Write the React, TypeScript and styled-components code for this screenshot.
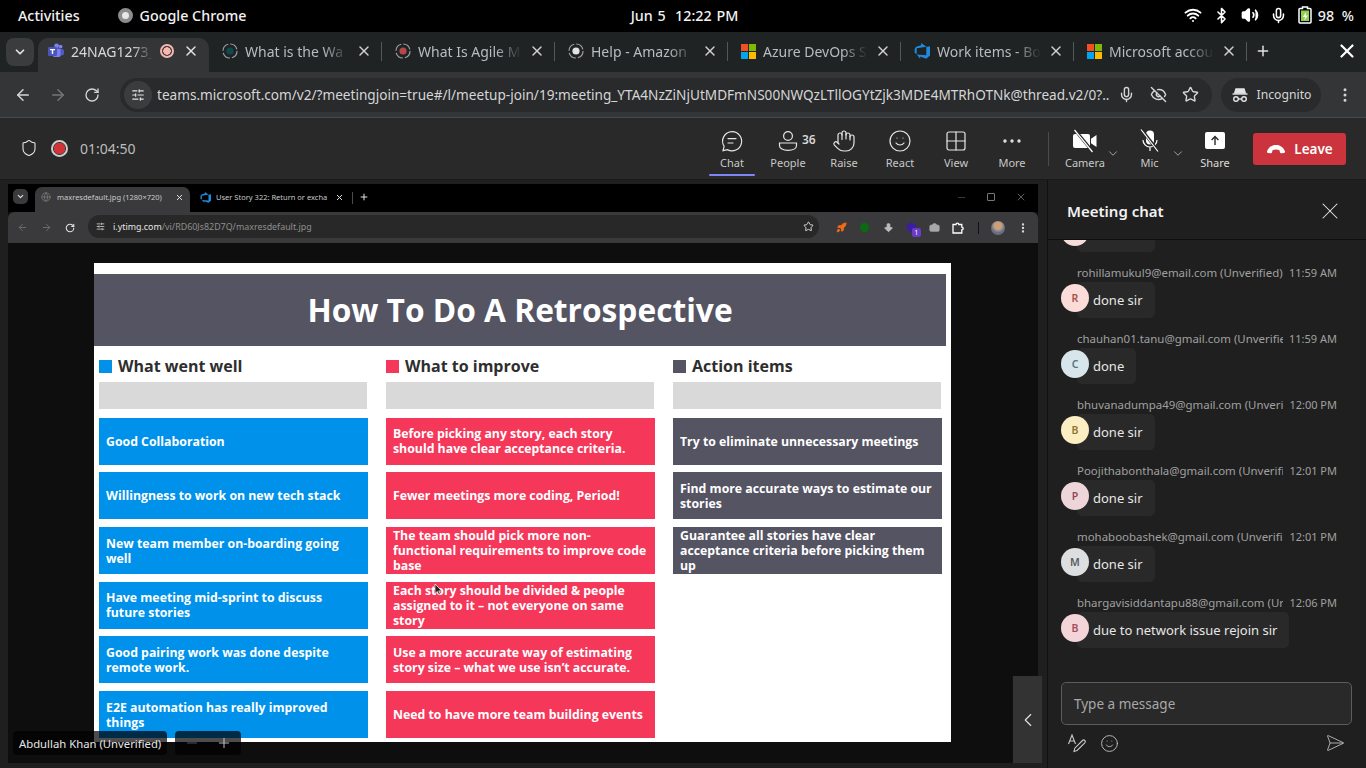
import React from 'react'
import styled, { createGlobalStyle } from 'styled-components'
import {
  ArrowBigDown,
  ArrowLeft,
  ArrowRight,
  Bluetooth,
  Box,
  Camera,
  ChevronDown,
  ChevronLeft,
  Ellipsis,
  EllipsisVertical,
  EyeOff,
  Globe,
  Grid2x2,
  Hand,
  Mic,
  Minus,
  Plus,
  Rocket,
  RotateCw,
  Shield,
  SlidersHorizontal,
  Smile,
  SendHorizontal,
  Star,
  Volume2,
  Wifi,
  X,
} from 'lucide-react'

const GlobalStyle = createGlobalStyle`
  html, body {
    margin: 0;
    padding: 0;
    width: 1366px;
    height: 768px;
    overflow: hidden;
    background: #1f1f1f;
    font-family: "Noto Sans", "Open Sans", sans-serif;
  }
  * { box-sizing: border-box; }
`

const MsLogo = ({ size = 15 }: { size?: number }) => (
  <svg width={size} height={size} viewBox="0 0 16 16">
    <rect width="7.5" height="7.5" fill="#f25022" />
    <rect x="8.5" width="7.5" height="7.5" fill="#7fba00" />
    <rect y="8.5" width="7.5" height="7.5" fill="#00a4ef" />
    <rect x="8.5" y="8.5" width="7.5" height="7.5" fill="#ffb900" />
  </svg>
)

const TeamsLogo = () => (
  <svg width="16" height="16" viewBox="0 0 16 16">
    <circle cx="12.6" cy="3.6" r="1.9" fill="#7b83eb" />
    <circle cx="8.6" cy="2.8" r="2.4" fill="#7b83eb" />
    <rect x="10" y="6" width="6" height="6.5" rx="2" fill="#5059c9" />
    <rect x="5" y="5.6" width="7.5" height="8.5" rx="1.5" fill="#7b83eb" />
    <rect x="0" y="4" width="9" height="9" rx="1" fill="#4b53bc" />
    <path d="M2 6h5v1.2H5.2V11H3.8V7.2H2z" fill="#fff" />
  </svg>
)

const AzureLogo = ({ size = 16 }: { size?: number }) => (
  <svg width={size} height={size} viewBox="0 0 16 16">
    <path
      d="M16 3.2v9.4l-3.8 3.2-6-2.2v2.1L2.7 11.5l9.6.8V4L16 3.2zM12.5 3.7 7.1 0v2.3L2.2 3.8.7 5.7v4.3l2 .9V5.3l9.8-1.6z"
      fill="#1f8be0"
    />
  </svg>
)

const RingFavicon = ({ tint }: { tint: string }) => (
  <svg width="16" height="16" viewBox="0 0 16 16">
    <circle cx="8" cy="8" r="7" fill="none" stroke="#9aa0a6" strokeWidth="1.2" strokeDasharray="9 2" />
    <circle cx="8" cy="8" r="3.6" fill={tint} />
  </svg>
)

const ChatIcon = () => (
  <svg width="24" height="24" viewBox="0 0 24 24" fill="none" stroke="#e6e6e6" strokeWidth="1.2">
    <path d="M12 2.6a9.6 9.6 0 1 1-4.6 18L3 21.6l1.1-4.3A9.6 9.6 0 0 1 12 2.6z" />
    <path d="M8 9.6h8M8 14h5" strokeLinecap="round" />
  </svg>
)

const PeopleIcon = () => (
  <svg width="24" height="24" viewBox="0 0 24 24" fill="none" stroke="#e6e6e6" strokeWidth="1.2">
    <circle cx="12" cy="7" r="4.4" />
    <path d="M3.5 14h17v2.4c0 3-3.6 5-8.5 5s-8.5-2-8.5-5z" />
  </svg>
)

const CameraOffIcon = () => (
  <svg width="26" height="24" viewBox="0 0 26 24">
    <path d="M3 5h13a2 2 0 0 1 2 2v10a2 2 0 0 1-2 2H3a2 2 0 0 1-2-2V7a2 2 0 0 1 2-2z" fill="#fff" />
    <path d="M19 9.8 24.5 6v12L19 14.2z" fill="#fff" />
    <path d="M3 1l18 22" stroke="#292929" strokeWidth="3" />
    <path d="M2.5 1l18 22" stroke="#fff" strokeWidth="1.2" />
  </svg>
)

const MicOffIcon = () => (
  <svg width="24" height="24" viewBox="0 0 24 24" fill="none">
    <rect x="8" y="1.5" width="8" height="14" rx="4" fill="#fff" />
    <path d="M5 11a7 7 0 0 0 14 0M12 18v4" stroke="#fff" strokeWidth="1.2" />
    <path d="M3.5 .5l17 22" stroke="#292929" strokeWidth="3" />
    <path d="M3 .5l17 22" stroke="#fff" strokeWidth="1.2" />
  </svg>
)

const ShareIcon = () => (
  <svg width="24" height="24" viewBox="0 0 24 24">
    <rect x="2" y="3" width="20" height="17" rx="2" fill="#fff" />
    <path d="M12 16V8M8.6 11 12 7.6l3.4 3.4" fill="none" stroke="#292929" strokeWidth="1.4" />
  </svg>
)

const HangUpIcon = () => (
  <svg width="20" height="12" viewBox="0 0 20 12">
    <path
      d="M1 8.2C3 3.8 6.4 2 10 2s7 1.8 9 6.2c.3.9-.2 1.6-1 1.7l-2.6.4c-.8.1-1.3-.3-1.5-1l-.4-2C12.4 6.7 11.2 6.5 10 6.5s-2.4.2-3.5.8l-.4 2c-.2.7-.7 1.1-1.5 1L2 9.9C1.2 9.8.7 9.1 1 8.2z"
      fill="#fff"
    />
  </svg>
)

const BatteryIcon = () => (
  <svg width="14" height="18" viewBox="0 0 14 18">
    <path d="M4.5 1h5v1.5H12a1 1 0 0 1 1 1V16a1 1 0 0 1-1 1H2a1 1 0 0 1-1-1V3.5a1 1 0 0 1 1-1h2.5z" fill="none" stroke="#fff" strokeWidth="1.5" />
    <rect x="3" y="4.5" width="8" height="10.5" fill="#8fd14f" />
    <path d="M8 6 4.8 11h2.4L6 14.5 10 9.5H7.6z" fill="#fff" />
  </svg>
)

const IncognitoIcon = () => (
  <svg width="18" height="18" viewBox="0 0 18 18" fill="none" stroke="#e3e3e3" strokeWidth="1.4">
    <path d="M5 3h8l1.3 4H3.7z" fill="#e3e3e3" />
    <path d="M1.5 8h15" />
    <circle cx="5" cy="13" r="2.3" />
    <circle cx="13" cy="13" r="2.3" />
    <path d="M7.3 13h3.4" />
  </svg>
)

const FormatIcon = () => (
  <svg width="20" height="20" viewBox="0 0 20 20" fill="none" stroke="#c8c8c8" strokeWidth="1.1">
    <path d="M1.5 11 5 2l3.500 9M2.800 8h4.400" />
    <path d="M7 18.500l.8-3.300L15.500 7.500a1.600 1.600 0 0 1 2.300 2.300l-7.700 7.700z" />
  </svg>
)

const ExtensionIcon = () => (
  <svg width="13" height="13" viewBox="0 0 13 13" fill="none" stroke="#fff" strokeWidth="1.3">
    <path d="M1 3.5h3a1.400 1.400 0 0 1 2.800 0h3v2.700a1.400 1.400 0 0 1 0 2.800V12H1z" />
  </svg>
)

const browserTabs = [
  { title: 'What is the Wa', icon: <RingFavicon tint="#0f4a4f" /> },
  { title: 'What Is Agile M', icon: <RingFavicon tint="#b5484b" /> },
  { title: 'Help - Amazon', icon: <RingFavicon tint="#e3e3e3" /> },
  { title: 'Azure DevOps S', icon: <MsLogo /> },
  { title: 'Work items - Bo', icon: <AzureLogo /> },
  { title: 'Microsoft accou', icon: <MsLogo /> },
]

const messages = [
  { sender: 'kumarsuraj12@gmail.com (Unverified)', time: '11:58 AM', text: 'done sir', letter: 'K', bg: '#f6dcd9', fg: '#a2544c' },
  { sender: 'rohillamukul9@email.com (Unverified)', time: '11:59 AM', text: 'done sir', letter: 'R', bg: '#fbdcd8', fg: '#a2544c' },
  { sender: 'chauhan01.tanu@gmail.com (Unverified)', time: '11:59 AM', text: 'done', letter: 'C', bg: '#d8e6ec', fg: '#4f7485' },
  { sender: 'bhuvanadumpa49@gmail.com (Unverified)', time: '12:00 PM', text: 'done sir', letter: 'B', bg: '#fbeec3', fg: '#8f7430' },
  { sender: 'Poojithabonthala@gmail.com (Unverified)', time: '12:01 PM', text: 'done sir', letter: 'P', bg: '#eed5da', fg: '#8c4a5a' },
  { sender: 'mohaboobashek@gmail.com (Unverified)', time: '12:01 PM', text: 'done sir', letter: 'M', bg: '#dcdee0', fg: '#565b60' },
  { sender: 'bhargavisiddantapu88@gmail.com (Unverified)', time: '12:06 PM', text: 'due to network issue rejoin sir', letter: 'B', bg: '#f3d4d8', fg: '#a14f5c' },
]

const retro = [
  {
    title: 'What went well',
    color: '#0091ea',
    items: [
      'Good Collaboration',
      'Willingness to work on new tech stack',
      'New team member on-boarding going well',
      'Have meeting mid-sprint to discuss future stories',
      'Good pairing work was done despite remote work.',
      'E2E automation has really improved things',
    ],
  },
  {
    title: 'What to improve',
    color: '#f5375a',
    items: [
      'Before picking any story, each story should have clear acceptance criteria.',
      'Fewer meetings more coding, Period!',
      'The team should pick more non-functional requirements to improve code base',
      'Each story should be divided & people assigned to it – not everyone on same story',
      'Use a more accurate way of estimating story size – what we use isn’t accurate.',
      'Need to have more team building events',
    ],
  },
  {
    title: 'Action items',
    color: '#555463',
    items: [
      'Try to eliminate unnecessary meetings',
      'Find more accurate ways to estimate our stories',
      'Guarantee all stories have clear acceptance criteria before picking them up',
    ],
  },
]

const tools = [
  { label: 'Chat', icon: <ChatIcon /> },
  { label: 'People', icon: <PeopleIcon />, count: '36' },
  { label: 'Raise', icon: <Hand size={24} strokeWidth={1.2} color="#e6e6e6" /> },
  { label: 'React', icon: <Smile size={24} strokeWidth={1.2} color="#e6e6e6" /> },
  { label: 'View', icon: <Grid2x2 size={24} strokeWidth={1.2} color="#e6e6e6" /> },
  { label: 'More', icon: <Ellipsis size={24} strokeWidth={1.4} color="#e6e6e6" /> },
]

export default function App() {
  return (
    <S.Screen>
      <GlobalStyle />
      <S.SystemBar>
        <S.SystemLeft>
          <span>Activities</span>
          <S.ChromeApp>
            <S.ChromeDot />
            Google Chrome
          </S.ChromeApp>
        </S.SystemLeft>
        <S.Clock>Jun 5&nbsp;&nbsp;12:22 PM</S.Clock>
        <S.SystemRight>
          <Wifi size={18} strokeWidth={2.6} color="#fff" />
          <Bluetooth size={17} strokeWidth={2.2} color="#fff" />
          <Volume2 size={18} strokeWidth={2.2} color="#fff" fill="#fff" />
          <Mic size={17} strokeWidth={2.2} color="#fff" />
          <S.Battery>
            <BatteryIcon />
            98 %
          </S.Battery>
        </S.SystemRight>
      </S.SystemBar>

      <S.TabStrip>
        <S.TabMenu>
          <ChevronDown size={14} strokeWidth={3} color="#e3e3e3" />
        </S.TabMenu>
        <S.ActiveTab>
          <TeamsLogo />
          <S.TabTitle $bright>24NAG1273_</S.TabTitle>
          <S.RecordDot />
          <X size={16} strokeWidth={2.2} color="#e3e3e3" />
        </S.ActiveTab>
        {browserTabs.map(t => (
          <S.Tab key={t.title}>
            {t.icon}
            <S.TabTitle>{t.title}</S.TabTitle>
            <X size={16} strokeWidth={2.2} color="#d0d0d0" />
          </S.Tab>
        ))}
        <S.NewTab>
          <Plus size={16} strokeWidth={2.2} color="#e3e3e3" />
        </S.NewTab>
        <S.WindowClose>
          <X size={22} strokeWidth={2.4} color="#fff" />
        </S.WindowClose>
      </S.TabStrip>

      <S.Toolbar>
        <S.NavButtons>
          <ArrowLeft size={18} color="#d5d5d5" />
          <ArrowRight size={18} color="#757575" />
          <RotateCw size={16} color="#d5d5d5" />
        </S.NavButtons>
        <S.UrlPill>
          <S.SiteChip>
            <SlidersHorizontal size={14} color="#e3e3e3" />
          </S.SiteChip>
          <S.Url>
            teams.microsoft.com/v2/?meetingjoin=true#/l/meetup-join/19:meeting_YTA4NzZiNjUtMDFmNS00NWQzLTllOGYtZjk3MDE4MTRhOTNk@thread.v2/0?...
          </S.Url>
          <S.UrlActions>
            <Mic size={17} color="#d5d5d5" />
            <EyeOff size={17} color="#d5d5d5" />
            <Star size={17} color="#d5d5d5" />
          </S.UrlActions>
        </S.UrlPill>
        <S.IncognitoPill>
          <IncognitoIcon />
          Incognito
        </S.IncognitoPill>
        <EllipsisVertical size={18} color="#d5d5d5" />
      </S.Toolbar>

      <S.MeetingBar>
        <S.Status>
          <Shield size={18} strokeWidth={1.4} color="#ececec" />
          <S.RecordBadge />
          <S.Timer>01:04:50</S.Timer>
        </S.Status>
        <S.Tools>
          {tools.map(t => (
            <S.Tool key={t.label} $active={t.label === 'Chat'}>
              <S.ToolIcon>
                {t.icon}
                {t.count && <S.Count>{t.count}</S.Count>}
              </S.ToolIcon>
              {t.label}
            </S.Tool>
          ))}
          <S.ToolDivider />
          <S.Tool>
            <S.ToolIcon>
              <CameraOffIcon />
            </S.ToolIcon>
            Camera
          </S.Tool>
          <S.Caret>
            <ChevronDown size={15} strokeWidth={1.2} color="#d6d6d6" />
          </S.Caret>
          <S.MicTool>
            <S.ToolIcon>
              <MicOffIcon />
            </S.ToolIcon>
            Mic
          </S.MicTool>
          <S.MicCaret>
            <ChevronDown size={15} strokeWidth={1.2} color="#d6d6d6" />
          </S.MicCaret>
          <S.ShareTool>
            <S.ToolIcon>
              <ShareIcon />
            </S.ToolIcon>
            Share
          </S.ShareTool>
          <S.LeaveButton>
            <HangUpIcon />
            Leave
          </S.LeaveButton>
        </S.Tools>
      </S.MeetingBar>

      <S.Main>
        <S.Stage>
          <S.SharedScreen>
            <S.InnerTabs>
              <S.InnerMenu>
                <ChevronDown size={9} strokeWidth={3} color="#e3e3e3" />
              </S.InnerMenu>
              <S.InnerActiveTab>
                <Globe size={10} color="#777" />
                <S.InnerTabTitle>maxresdefault.jpg (1280×720)</S.InnerTabTitle>
                <X size={9} strokeWidth={2.6} color="#e3e3e3" />
              </S.InnerActiveTab>
              <S.InnerTab>
                <AzureLogo size={11} />
                <S.InnerTabTitle>User Story 322: Return or excha</S.InnerTabTitle>
                <X size={9} strokeWidth={2.6} color="#e3e3e3" />
              </S.InnerTab>
              <S.InnerDivider />
              <S.InnerPlus>
                <Plus size={10} strokeWidth={2.4} color="#e3e3e3" />
              </S.InnerPlus>
              <S.WindowControls>
                <Minus size={11} strokeWidth={1} color="#777" />
                <S.RestoreIcon />
                <X size={12} strokeWidth={1} color="#bdbdbd" />
              </S.WindowControls>
            </S.InnerTabs>
            <S.InnerToolbar>
              <S.InnerNav>
                <ArrowLeft size={11} color="#6f6f6f" />
                <ArrowRight size={11} color="#6f6f6f" />
                <RotateCw size={10} strokeWidth={2.6} color="#e0e0e0" />
              </S.InnerNav>
              <S.InnerUrl>
                <SlidersHorizontal size={9} color="#e0e0e0" />
                <S.InnerUrlText>
                  <b>i.ytimg.com</b>/vi/RD60Js82D7Q/maxresdefault.jpg
                </S.InnerUrlText>
                <Star size={11} strokeWidth={2} color="#e0e0e0" />
              </S.InnerUrl>
              <S.Extensions>
                <Rocket size={11} color="#f26b15" fill="#f26b15" />
                <Shield size={11} color="#0b6b12" fill="#0b6b12" />
                <ArrowBigDown size={11} color="#bcbcbc" fill="#bcbcbc" />
                <S.ExtBadge>
                  <Box size={11} color="#3a1fa0" fill="#3a1fa0" />
                  <S.ExtCount>1</S.ExtCount>
                </S.ExtBadge>
                <Camera size={11} color="#a8a8a8" fill="#a8a8a8" />
                <ExtensionIcon />
                <S.ExtDivider />
                <S.ExtAvatar />
                <EllipsisVertical size={12} strokeWidth={2.6} color="#e0e0e0" />
              </S.Extensions>
            </S.InnerToolbar>
            <S.SlideArea>
              <S.Slide>
                <S.Banner>How To Do A Retrospective</S.Banner>
                <S.Columns>
                  {retro.map(col => (
                    <S.Column key={col.title}>
                      <S.ColumnHead>
                        <S.Swatch $color={col.color} />
                        {col.title}
                      </S.ColumnHead>
                      <S.GreyBar />
                      {col.items.map(item => (
                        <S.Card key={item} $color={col.color}>
                          {item}
                        </S.Card>
                      ))}
                    </S.Column>
                  ))}
                </S.Columns>
              </S.Slide>
            </S.SlideArea>
            <S.Cursor width="9" height="13" viewBox="0 0 9 13">
              <path d="M1 1v9.5l2.3-2 1.6 3.4 1.5-.7-1.6-3.3h3z" fill="#222" stroke="#fff" strokeWidth=".7" />
            </S.Cursor>
            <S.Overlays>
              <S.NameTag>Abdullah Khan (Unverified)</S.NameTag>
              <S.ZoomTag>
                <Minus size={16} strokeWidth={1.2} color="#5d6b78" />
                <Plus size={16} strokeWidth={1.2} color="#e8e8e8" />
              </S.ZoomTag>
            </S.Overlays>
            <S.CollapseHandle>
              <ChevronLeft size={22} strokeWidth={1.2} color="#e6e6e6" />
            </S.CollapseHandle>
          </S.SharedScreen>
        </S.Stage>

        <S.ChatPanel>
          <S.ChatHeader>
            Meeting chat
            <X size={28} strokeWidth={0.9} color="#e6e6e6" />
          </S.ChatHeader>
          <S.MessageList>
            {messages.map(m => (
              <S.Message key={m.sender}>
                <S.MessageMeta>
                  <S.Sender>{m.sender}</S.Sender>
                  <S.Time>{m.time}</S.Time>
                </S.MessageMeta>
                <S.MessageRow>
                  <S.Avatar $bg={m.bg} $fg={m.fg}>
                    {m.letter}
                  </S.Avatar>
                  <S.Bubble>{m.text}</S.Bubble>
                </S.MessageRow>
              </S.Message>
            ))}
          </S.MessageList>
          <S.Composer>Type a message</S.Composer>
          <S.ComposerActions>
            <S.ComposerLeft>
              <FormatIcon />
              <Smile size={19} strokeWidth={1.1} color="#c8c8c8" />
            </S.ComposerLeft>
            <SendHorizontal size={20} strokeWidth={1} color="#c8c8c8" />
          </S.ComposerActions>
        </S.ChatPanel>
      </S.Main>
    </S.Screen>
  )
}

const toolLabel = `
  height: 100%;
  flex: none;
  display: flex;
  flex-direction: column;
  align-items: center;
  justify-content: flex-end;
  padding-bottom: 9px;
  font-size: 11px;
  line-height: 15px;
  color: #c8c8c8;
`

const S = {
  Screen: styled.div`
    width: 1366px;
    height: 768px;
    display: flex;
    flex-direction: column;
    overflow: hidden;
    background: #1f1f1f;
  `,

  SystemBar: styled.div`
    height: 32px;
    flex: none;
    display: grid;
    grid-template-columns: 1fr auto 1fr;
    align-items: center;
    padding: 0 12px 2px 18px;
    background: #000;
    color: #f2f2f2;
    font-size: 14.3px;
    font-weight: 500;
  `,

  SystemLeft: styled.div`
    display: flex;
    align-items: center;
    gap: 38px;
  `,

  ChromeApp: styled.div`
    display: flex;
    align-items: center;
    gap: 7px;
  `,

  ChromeDot: styled.span`
    width: 15px;
    height: 15px;
    border-radius: 50%;
    border: 4px solid #8c8c8c;
    background: #e8e8e8;
  `,

  Clock: styled.div`
    margin-left: -3px;
    word-spacing: 1px;
    text-align: center;
  `,

  SystemRight: styled.div`
    display: flex;
    align-items: center;
    justify-content: flex-end;
    gap: 11px;
  `,

  Battery: styled.div`
    display: flex;
    align-items: center;
    gap: 6px;
    word-spacing: 4px;
  `,

  TabStrip: styled.div`
    height: 40px;
    flex: none;
    display: flex;
    align-items: flex-end;
    padding-left: 6px;
    background: #202324;
  `,

  TabMenu: styled.div`
    width: 28px;
    height: 28px;
    margin-right: 4px;
    flex: none;
    align-self: center;
    display: flex;
    align-items: center;
    justify-content: center;
    border-radius: 8px;
    background: #3a3c3e;
  `,

  ActiveTab: styled.div`
    width: 171px;
    height: 34px;
    flex: none;
    display: flex;
    align-items: center;
    gap: 7px;
    padding: 0 10px 8px 10px;
    border-radius: 10px 10px 0 0;
    background: #333537;
  `,

  Tab: styled.div`
    width: 173px;
    height: 34px;
    flex: none;
    display: flex;
    align-items: center;
    gap: 7px;
    padding: 0 10px 8px 13px;
    position: relative;

    &::after {
      content: '';
      position: absolute;
      right: 0;
      top: 4px;
      height: 19px;
      width: 1px;
      background: #55585a;
    }
  `,

  TabTitle: styled.div<{ $bright?: boolean }>`
    flex: 1;
    min-width: 0;
    overflow: hidden;
    white-space: nowrap;
    font-size: 14px;
    color: ${p => (p.$bright ? '#d8d8d8' : '#b8bcbf')};
    -webkit-mask-image: linear-gradient(to right, #000 75%, transparent);
    mask-image: linear-gradient(to right, #000 75%, transparent);
  `,

  RecordDot: styled.span`
    width: 14px;
    height: 14px;
    margin-right: 2px;
    flex: none;
    border-radius: 50%;
    border: 2px solid #f7b7b0;
    background: radial-gradient(circle, #f7b7b0 0 3.5px, #333537 4px);
  `,

  NewTab: styled.div`
    width: 32px;
    height: 34px;
    padding-bottom: 8px;
    display: flex;
    align-items: center;
    justify-content: center;
  `,

  WindowClose: styled.div`
    margin-left: auto;
    width: 38px;
    height: 34px;
    padding-bottom: 8px;
    display: flex;
    align-items: center;
    justify-content: center;
  `,

  Toolbar: styled.div`
    height: 46px;
    flex: none;
    display: flex;
    align-items: center;
    padding: 0 12px 0 14px;
    background: #333537;
    border-bottom: 1px solid #47494b;
  `,

  NavButtons: styled.div`
    width: 106px;
    display: flex;
    align-items: center;
    gap: 17px;
    flex: none;
  `,

  UrlPill: styled.div`
    flex: 1;
    min-width: 0;
    height: 34px;
    margin-right: 9px;
    display: flex;
    align-items: center;
    border-radius: 17px;
    background: #282a2c;
    padding: 0 13px 0 4px;
  `,

  SiteChip: styled.div`
    width: 28px;
    height: 28px;
    margin-right: 5px;
    flex: none;
    display: flex;
    align-items: center;
    justify-content: center;
    border-radius: 50%;
    background: #3a3c3e;
  `,

  Url: styled.div`
    flex: 1;
    min-width: 0;
    overflow: hidden;
    white-space: nowrap;
    font-size: 13.6px;
    color: #d6d6d6;
  `,

  UrlActions: styled.div`
    display: flex;
    align-items: center;
    gap: 15px;
    margin-left: 8px;
    flex: none;
  `,

  IncognitoPill: styled.div`
    width: 100px;
    height: 34px;
    margin-right: 15px;
    flex: none;
    display: flex;
    align-items: center;
    justify-content: center;
    gap: 8px;
    border-radius: 17px;
    background: #282a2c;
    font-size: 12.2px;
    color: #d6d6d6;
  `,

  MeetingBar: styled.div`
    height: 62px;
    flex: none;
    display: flex;
    align-items: center;
    justify-content: space-between;
    padding: 0 20px;
    background: #292929;
    border-bottom: 1px solid #1a1a1a;
  `,

  Status: styled.div`
    display: flex;
    align-items: center;
    gap: 13px;
    margin-top: -1px;
  `,

  RecordBadge: styled.span`
    width: 17px;
    height: 17px;
    margin-right: -1px;
    border-radius: 50%;
    border: 2px solid #cfcfcf;
    background: radial-gradient(circle, #d13438 0 5.5px, #292929 6px);
  `,

  Timer: styled.span`
    font-size: 14px;
    color: #bdbdbd;
  `,

  Tools: styled.div`
    display: flex;
    align-items: center;
    height: 100%;
  `,

  Tool: styled.div<{ $active?: boolean }>`
    ${toolLabel}
    position: relative;
    width: 56px;

    &::after {
      content: '';
      display: ${p => (p.$active ? 'block' : 'none')};
      position: absolute;
      left: 5px;
      right: 5px;
      bottom: 3px;
      height: 2px;
      border-radius: 1px;
      background: #7f85f5;
    }
  `,

  ToolIcon: styled.div`
    position: relative;
    height: 26px;
    display: flex;
    align-items: center;
    justify-content: center;
    margin-bottom: 1px;
  `,

  Count: styled.span`
    position: absolute;
    left: 26px;
    top: 4px;
    font-size: 12px;
    font-weight: 600;
    color: #d6d6d6;
  `,

  ToolDivider: styled.div`
    width: 1px;
    height: 34px;
    margin: 0 8px;
    background: #4b4b4b;
  `,

  Caret: styled.div`
    width: 14px;
    margin: 10px 0 0 -7px;
    flex: none;
    display: flex;
    justify-content: center;
  `,

  MicCaret: styled.div`
    width: 14px;
    margin-top: 10px;
    flex: none;
    display: flex;
    justify-content: center;
  `,

  MicTool: styled.div`
    ${toolLabel}
    width: 43px;
    margin-left: 8px;
  `,

  ShareTool: styled.div`
    ${toolLabel}
    width: 50px;
    margin-left: 5px;
    color: #ddd;
  `,

  LeaveButton: styled.div`
    width: 93px;
    height: 32px;
    margin-left: 13px;
    margin-top: 1px;
    flex: none;
    display: flex;
    align-items: center;
    justify-content: center;
    gap: 8px;
    border-radius: 3px;
    background: #cb343c;
    font-size: 13.5px;
    font-weight: 600;
    color: #fff;
  `,

  Main: styled.div`
    flex: 1;
    min-height: 0;
    display: flex;
  `,

  Stage: styled.div`
    width: 1047px;
    flex: none;
    padding: 4px 9px 5px 8px;
    background: #1f1f1f;
  `,

  SharedScreen: styled.div`
    position: relative;
    height: 100%;
    display: flex;
    flex-direction: column;
    background: #0e0e0e;
  `,

  InnerTabs: styled.div`
    height: 28px;
    flex: none;
    display: flex;
    align-items: flex-end;
    padding: 0 10px 0 5px;
    background: #000;
  `,

  InnerMenu: styled.div`
    width: 15px;
    height: 15px;
    margin: 0 7px 8px 0;
    display: flex;
    align-items: center;
    justify-content: center;
    border-radius: 5px;
    background: #3a3a3c;
  `,

  InnerActiveTab: styled.div`
    width: 155px;
    height: 25px;
    flex: none;
    display: flex;
    align-items: center;
    gap: 6px;
    padding: 0 6px 5px;
    border-radius: 7px 7px 0 0;
    background: #3a3a3c;
  `,

  InnerTab: styled.div`
    width: 160px;
    height: 25px;
    flex: none;
    display: flex;
    align-items: center;
    gap: 5px;
    padding: 0 6px 5px 10px;
  `,

  InnerTabTitle: styled.div`
    flex: 1;
    min-width: 0;
    overflow: hidden;
    white-space: nowrap;
    font-size: 7.5px;
    color: #c9c9c9;
  `,

  InnerDivider: styled.div`
    width: 1px;
    height: 12px;
    margin: 0 6px 8px 2px;
    background: #4b4b4b;
  `,

  InnerPlus: styled.div`
    height: 25px;
    padding-bottom: 5px;
    display: flex;
    align-items: center;
  `,

  WindowControls: styled.div`
    margin-left: auto;
    display: flex;
    align-items: center;
    gap: 20px;
    height: 25px;
    padding: 0 1px 5px 0;
  `,

  RestoreIcon: styled.span`
    width: 8px;
    height: 8px;
    border: 1px solid #777;
    border-radius: 1px;
  `,

  InnerToolbar: styled.div`
    height: 31px;
    flex: none;
    display: flex;
    align-items: center;
    padding: 0 9px;
    background: #3a3a3c;
    border-radius: 6px 6px 0 0;
  `,

  InnerNav: styled.div`
    width: 71px;
    flex: none;
    display: flex;
    align-items: center;
    gap: 13px;
  `,

  InnerUrl: styled.div`
    width: 731px;
    height: 23px;
    margin-top: -2px;
    flex: none;
    display: flex;
    align-items: center;
    gap: 8px;
    padding: 0 5px 0 8px;
    border-radius: 12px;
    background: #282828;
  `,

  InnerUrlText: styled.div`
    flex: 1;
    font-size: 8.9px;
    white-space: nowrap;
    color: #8f8f8f;

    b {
      font-weight: 400;
      color: #e6e6e6;
    }
  `,

  Extensions: styled.div`
    flex: 1;
    display: flex;
    align-items: center;
    justify-content: space-between;
    padding-left: 17px;
  `,

  ExtBadge: styled.div`
    position: relative;
    display: flex;
  `,

  ExtCount: styled.span`
    position: absolute;
    left: 6px;
    top: 6px;
    width: 9px;
    height: 9px;
    border-radius: 2px;
    background: #6a3cc4;
    font-size: 6.5px;
    line-height: 9px;
    text-align: center;
    color: #fff;
  `,

  ExtDivider: styled.span`
    width: 1px;
    height: 12px;
    background: #111;
  `,

  ExtAvatar: styled.span`
    width: 14px;
    height: 14px;
    border-radius: 50%;
    background: radial-gradient(circle at 50% 35%, #c9a07a 0 30%, #5d6f8f 60%, #8a6a52);
  `,

  SlideArea: styled.div`
    flex: 1;
    min-height: 0;
    padding: 20px 86px 0;
  `,

  Slide: styled.div`
    width: 857px;
    height: 479px;
    padding: 11px 5px 0 0;
    overflow: hidden;
    background: #fff;
  `,

  Banner: styled.div`
    height: 72px;
    padding-bottom: 2px;
    display: flex;
    align-items: center;
    justify-content: center;
    background: #555463;
    font-family: "Open Sans", sans-serif;
    font-size: 31.7px;
    font-weight: 700;
    color: #fff;
  `,

  Columns: styled.div`
    display: grid;
    grid-template-columns: repeat(3, 269px);
    gap: 18px;
    padding-left: 5px;
  `,

  Column: styled.div`
    display: flex;
    flex-direction: column;
    gap: 7.7px;
  `,

  ColumnHead: styled.div`
    height: 36px;
    padding-top: 4px;
    margin-bottom: -7.7px;
    display: flex;
    align-items: center;
    gap: 6px;
    font-family: "Open Sans", sans-serif;
    font-size: 16px;
    font-weight: 700;
    color: #2e2e2e;
  `,

  Swatch: styled.span<{ $color: string }>`
    width: 13px;
    height: 13px;
    background: ${p => p.$color};
  `,

  GreyBar: styled.div`
    height: 27px;
    margin-right: 1px;
    margin-bottom: 1px;
    background: #d9d9d9;
  `,

  Card: styled.div<{ $color: string }>`
    height: 47px;
    flex: none;
    display: flex;
    align-items: center;
    padding: 2px 7px 0;
    background: ${p => p.$color};
    font-family: "Open Sans", sans-serif;
    font-size: 12.3px;
    font-weight: 700;
    line-height: 14.8px;
    color: #fff;
  `,

  Cursor: styled.svg`
    position: absolute;
    left: 426px;
    top: 399px;
  `,

  Overlays: styled.div`
    position: absolute;
    left: 5px;
    bottom: 8px;
    display: flex;
    gap: 8px;
  `,

  NameTag: styled.div`
    height: 24px;
    padding: 0 6px;
    display: flex;
    align-items: center;
    border-radius: 4px;
    background: rgba(0, 0, 0, 0.7);
    font-size: 11.3px;
    color: #e6e6e6;
  `,

  ZoomTag: styled.div`
    width: 66px;
    height: 24px;
    display: flex;
    align-items: center;
    justify-content: space-between;
    padding: 0 9px;
    border-radius: 4px;
    background: rgba(0, 0, 0, 0.7);
  `,

  CollapseHandle: styled.div`
    position: absolute;
    right: -4px;
    bottom: 0;
    width: 30px;
    height: 87px;
    display: flex;
    align-items: center;
    justify-content: center;
    background: #333;
    border-left: 1px solid #111;
  `,

  ChatPanel: styled.div`
    width: 319px;
    flex: none;
    display: flex;
    flex-direction: column;
    background: #1f1f1f;
    border-left: 1px solid #111;
  `,

  ChatHeader: styled.div`
    height: 60px;
    flex: none;
    display: flex;
    align-items: center;
    justify-content: space-between;
    padding: 2px 22px 0 19px;
    border-bottom: 1px solid #0f0f0f;
    font-size: 15px;
    font-weight: 600;
    color: #f2f2f2;
  `,

  MessageList: styled.div`
    flex: 1;
    min-height: 0;
    overflow: hidden;
    display: flex;
    flex-direction: column;
    justify-content: flex-end;
    gap: 13px;
    padding: 0 0 34px 13px;
  `,

  Message: styled.div`
    flex: none;
    display: flex;
    flex-direction: column;
  `,

  MessageMeta: styled.div`
    height: 17px;
    padding: 0 29px 0 16px;
    display: flex;
    justify-content: space-between;
    font-size: 11.45px;
    line-height: 15px;
    color: #a0a0a0;
  `,

  Sender: styled.div`
    width: 206px;
    flex: none;
    overflow: hidden;
    white-space: nowrap;
  `,

  Time: styled.span`
    font-size: 11px;
  `,

  MessageRow: styled.div`
    position: relative;
    padding-left: 16px;
  `,

  Avatar: styled.div<{ $bg: string; $fg: string }>`
    position: absolute;
    left: 0;
    top: 2px;
    width: 28px;
    height: 28px;
    display: flex;
    align-items: center;
    justify-content: center;
    border-radius: 50%;
    background: ${p => p.$bg};
    color: ${p => p.$fg};
    font-size: 10.5px;
    font-weight: 600;
  `,

  Bubble: styled.div`
    width: fit-content;
    height: 36px;
    display: flex;
    align-items: center;
    padding: 0 12px 0 16px;
    border-radius: 5px;
    background: #292929;
    font-size: 13px;
    color: #e6e6e6;
  `,

  Composer: styled.div`
    height: 43px;
    margin: 0 14px 0 13px;
    flex: none;
    display: flex;
    align-items: center;
    padding: 0 12px;
    border: 1px solid #5c5c5c;
    border-radius: 5px;
    background: #292929;
    font-size: 13.5px;
    color: #a8a8a8;
  `,

  ComposerActions: styled.div`
    height: 43px;
    flex: none;
    display: flex;
    align-items: center;
    justify-content: space-between;
    padding: 0 21px 7px 19px;
  `,

  ComposerLeft: styled.div`
    display: flex;
    align-items: center;
    gap: 13px;
  `,
}
